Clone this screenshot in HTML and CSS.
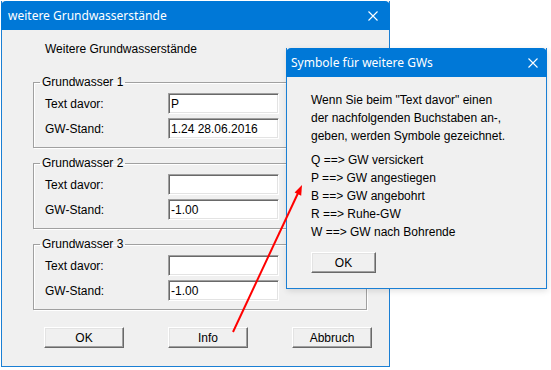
FILE: index.html
```html
<!DOCTYPE html>
<html lang="de">
<head>
  <meta charset="UTF-8">
  <title>weitere Grundwasserstände</title>
  <link rel="stylesheet" href="styles.css">
</head>
<body>
  <div class="desk">
    <div class="win main">
      <div class="titlebar">
        <span>weitere Grundwasserstände</span>
        <svg class="close" width="10" height="10" viewBox="0 0 10 10"><path d="M0.5 0.5L9.5 9.5M9.5 0.5L0.5 9.5" stroke="#fff" stroke-width="1.1"/></svg>
      </div>
      <div class="body">
        <p class="head">Weitere Grundwasserstände</p>
        <fieldset class="grp">
          <legend>Grundwasser 1</legend>
          <div class="row"><label>Text davor:</label><input class="feld" value="P"></div>
          <div class="row"><label>GW-Stand:</label><input class="feld" value="1.24 28.06.2016"></div>
        </fieldset>
        <fieldset class="grp">
          <legend>Grundwasser 2</legend>
          <div class="row"><label>Text davor:</label><input class="feld" value=""></div>
          <div class="row"><label>GW-Stand:</label><input class="feld" value="-1.00"></div>
        </fieldset>
        <fieldset class="grp">
          <legend>Grundwasser 3</legend>
          <div class="row"><label>Text davor:</label><input class="feld" value=""></div>
          <div class="row"><label>GW-Stand:</label><input class="feld" value="-1.00"></div>
        </fieldset>
        <div class="knoepfe">
          <button class="knopf">OK</button>
          <button class="knopf">Info</button>
          <button class="knopf">Abbruch</button>
        </div>
      </div>
    </div>

    <div class="win info">
      <div class="titlebar">
        <span>Symbole für weitere GWs</span>
        <svg class="close" width="10" height="10" viewBox="0 0 10 10"><path d="M0.5 0.5L9.5 9.5M9.5 0.5L0.5 9.5" stroke="#fff" stroke-width="1.1"/></svg>
      </div>
      <div class="body">
        <p class="hinweis">Wenn Sie beim "Text davor" einen<br>der nachfolgenden Buchstaben an-,<br>geben, werden Symbole gezeichnet.</p>
        <ul class="liste">
          <li>Q ==&gt; GW versickert</li>
          <li>P ==&gt; GW angestiegen</li>
          <li>B ==&gt; GW angebohrt</li>
          <li>R ==&gt; Ruhe-GW</li>
          <li>W ==&gt; GW nach Bohrende</li>
        </ul>
        <button class="knopf klein">OK</button>
      </div>
    </div>

    <!-- Pfeil vom Info-Knopf zum Hinweisfenster -->
    <svg class="pfeil" width="551" height="370" viewBox="0 0 551 370">
      <line x1="233" y1="332" x2="299" y2="191" stroke="#f00" stroke-width="2"/>
      <polygon points="302,185 301.2,195.8 294.6,192.6" fill="#f00"/>
    </svg>
  </div>
</body>
</html>
```

FILE: styles.css
```css
body { margin: 0; background: #fff; font-family: "Liberation Sans", Arial, sans-serif; font-size: 12px; color: #000; }
.desk { position: relative; width: 551px; height: 370px; overflow: hidden; }

.win { background: #f0f0f0; border: 1px solid #1a7fd4; border-top: none; box-sizing: border-box; display: flex; flex-direction: column; }
.titlebar { height: 29px; background: #0078d7; color: #fff; border-radius: 5px 5px 0 0; margin: 0 -1px; display: flex; align-items: center; justify-content: space-between; padding: 0 12px 0 7px; font-family: "Noto Sans", sans-serif; font-size: 12px; }
.close { display: block; }

.main { margin: 1px 0 0 1px; width: 389px; height: 366px; }
.main .body { padding: 12px 0 0 31px; }
.head { margin: 0 0 19px 12px; line-height: 14px; }

.grp { margin: 0 0 8px 0; width: 334px; box-sizing: border-box; padding: 4px 0 8px 11px; border: 1px solid #a0a0a0; box-shadow: 1px 1px 0 #fff, inset 1px 1px 0 #fff; }
.grp legend { line-height: 14px; padding: 0 2px; margin-left: -5px; }
.row { display: flex; align-items: center; height: 21px; }
.row + .row { margin-top: 4px; }
.row label { width: 123px; }
.feld { width: 111px; height: 21px; box-sizing: border-box; margin: 0; padding: 0 2px; font: inherit; background: #fff; border: 1px solid; border-color: #a0a0a0 #fff #fff #a0a0a0; box-shadow: inset 1px 1px 0 #696969, inset -1px -1px 0 #e3e3e3; outline: none; }

.knoepfe { display: flex; gap: 44px; margin: 17px 0 0 11px; }
.knopf { width: 80px; height: 21px; margin: 0; padding: 0; font: inherit; color: #000; background: #f0f0f0; border: 1px solid; border-color: #fff #696969 #696969 #fff; box-shadow: inset -1px -1px 0 #a0a0a0, inset 1px 1px 0 #e3e3e3; }

.info { position: absolute; left: 286px; top: 48px; width: 261px; height: 241px; box-shadow: 1px 2px 6px rgba(0,0,0,0.12); }
.info .titlebar { padding: 0 9px 0 5px; }
.info .body { padding: 14px 0 0 24px; }
.hinweis { margin: 0; line-height: 18px; }
.liste { list-style: none; margin: 6px 0 0 0; padding: 0; line-height: 18px; }
.klein { width: 65px; margin-top: 11px; }

.pfeil { position: absolute; left: 0; top: 0; pointer-events: none; }
```
